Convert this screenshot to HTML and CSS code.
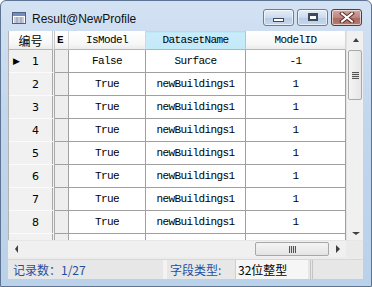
FILE: index.html
```html
<!DOCTYPE html>
<html lang="zh">
<head>
	<meta charset="UTF-8">
	<title>Result@NewProfile</title>
	<link rel="stylesheet" href="styles.css">
</head>
<body>
	<div class="window">
		<div class="titlebar">
			<svg class="appicon" width="14" height="12" viewBox="0 0 14 12">
				<rect x="0.5" y="0.5" width="13" height="11" fill="#fff" stroke="#55607a"/>
				<rect x="1" y="1" width="12" height="3" fill="#6f8fc4"/>
				<path d="M2 6h10M2 8h10M2 10h10M5 5v6M9 5v6" stroke="#8a9ab8" stroke-width="1"/>
			</svg>
			<span class="title">Result@NewProfile</span>
			<div class="caption-btns">
				<div class="cbtn"><span class="ico-min"></span></div>
				<div class="cbtn"><span class="ico-max"></span></div>
				<div class="cbtn close">
					<svg width="16" height="11" viewBox="0 0 16 11">
						<path d="M3 1.5l10 8M13 1.5l-10 8" stroke="#5a2a25" stroke-width="4" stroke-linecap="square"/>
						<path d="M3 1.5l10 8M13 1.5l-10 8" stroke="#fff" stroke-width="2" stroke-linecap="square"/>
					</svg>
				</div>
			</div>
		</div>

		<div class="client">
			<div class="gridwrap">
				<div class="grid">
					<div class="row head">
						<div class="rh">编号</div>
						<div class="c e">E</div>
						<div class="c">IsModel</div>
						<div class="c sel">DatasetName</div>
						<div class="c">ModelID</div>
					</div>
					<div class="row">
						<div class="rh"><span class="cur">&#9654;</span>1</div>
						<div class="c e"></div>
						<div class="c">False</div>
						<div class="c">Surface</div>
						<div class="c">-1</div>
					</div>
					<div class="row">
						<div class="rh">2</div>
						<div class="c e"></div>
						<div class="c">True</div>
						<div class="c">newBuildings1</div>
						<div class="c">1</div>
					</div>
					<div class="row">
						<div class="rh">3</div>
						<div class="c e"></div>
						<div class="c">True</div>
						<div class="c">newBuildings1</div>
						<div class="c">1</div>
					</div>
					<div class="row">
						<div class="rh">4</div>
						<div class="c e"></div>
						<div class="c">True</div>
						<div class="c">newBuildings1</div>
						<div class="c">1</div>
					</div>
					<div class="row">
						<div class="rh">5</div>
						<div class="c e"></div>
						<div class="c">True</div>
						<div class="c">newBuildings1</div>
						<div class="c">1</div>
					</div>
					<div class="row">
						<div class="rh">6</div>
						<div class="c e"></div>
						<div class="c">True</div>
						<div class="c">newBuildings1</div>
						<div class="c">1</div>
					</div>
					<div class="row">
						<div class="rh">7</div>
						<div class="c e"></div>
						<div class="c">True</div>
						<div class="c">newBuildings1</div>
						<div class="c">1</div>
					</div>
					<div class="row">
						<div class="rh">8</div>
						<div class="c e"></div>
						<div class="c">True</div>
						<div class="c">newBuildings1</div>
						<div class="c">1</div>
					</div>
					<div class="row">
						<div class="rh"></div>
						<div class="c e"></div>
						<div class="c"></div>
						<div class="c"></div>
						<div class="c"></div>
					</div>
				</div>
				<div class="vscroll">
					<div class="sbtn"><span class="arr up"></span></div>
					<div class="vthumb"><span class="grip-h"></span></div>
					<div class="track"></div>
					<div class="sbtn"><span class="arr down"></span></div>
				</div>
			</div>

			<div class="hrow">
				<div class="hscroll">
					<div class="sbtn"><span class="arr left"></span></div>
					<div class="htrack"></div>
					<div class="hthumb"><span class="grip-v"></span></div>
					<div class="sbtn"><span class="arr right"></span></div>
				</div>
				<div class="corner"></div>
			</div>

			<div class="statusbar">
				<div class="panel first">记录数：1/27</div>
				<div class="panel label">字段类型:</div>
				<div class="panel value">32位整型</div>
				<div class="panel last"></div>
			</div>
		</div>
	</div>
</body>
</html>
```

FILE: styles.css
```css
* {
	box-sizing: border-box;
}
html, body {
	margin: 0;
	padding: 0;
	background: #fff;
}
/* 窗口外框 */
.window {
	width: 372px;
	height: 287px;
	border: 1px solid #5d7592;
	border-radius: 6px 6px 0 0;
	background: linear-gradient(180deg, #d3e2f3 0%, #c2d6ed 40%, #bad1ea 100%);
	display: flex;
	flex-direction: column;
	overflow: hidden;
}
.titlebar {
	height: 30px;
	display: flex;
	align-items: center;
	padding-left: 11px;
	padding-top: 5px;
	flex: none;
}
.appicon {
	margin-top: -2px;
}
.title {
	font-family: "Liberation Sans", "Noto Sans", sans-serif;
	font-size: 12px;
	color: #111;
	margin-left: 6px;
	margin-top: 1px;
}
.caption-btns {
	margin-left: auto;
	margin-right: 9px;
	margin-top: -3px;
	display: flex;
	gap: 3px;
}
.cbtn {
	width: 31px;
	height: 17px;
	border: 1px solid #6a7d95;
	border-radius: 3px;
	background: linear-gradient(180deg, #e4edf7 0%, #cbdbee 50%, #b7cce5 51%, #c7d8ec 100%);
	box-shadow: inset 0 0 0 1px rgba(255,255,255,.6);
	display: flex;
	align-items: center;
	justify-content: center;
}
.cbtn.close {
	width: 31px;
	border-color: #5b3a36;
	background: linear-gradient(180deg, #d2a8a2 0%, #bd867e 50%, #a86a61 51%, #b47c74 100%);
}
.ico-min {
	width: 11px;
	height: 4px;
	margin-top: 5px;
	background: #fff;
	border: 1px solid #3e4b5c;
}
.ico-max {
	width: 10px;
	height: 8px;
	border: 1px solid #3e4b5c;
	border-top-width: 2px;
	background: #fff;
	box-shadow: inset 0 0 0 1px #3e4b5c, inset 0 0 0 2px #fff;
}

/* 客户区 */
.client {
	flex: 1;
	margin: 0 8px 8px 7px;
	display: flex;
	flex-direction: column;
	background: #ececec;
}
.gridwrap {
	height: 209px;
	display: flex;
	background: #fff;
	border-left: 1px solid #b3b3b3;
}
.grid {
	width: 338px;
	height: 209px;
	overflow: hidden;
	font-family: "Liberation Mono", "DejaVu Sans Mono", monospace;
	font-size: 11px;
	letter-spacing: -0.6px;
	color: #000;
}
.row {
	display: grid;
	grid-template-columns: 46px 14px 77px 100px 100px;
	height: 23px;
}
.row .c,
.row .rh {
	display: flex;
	align-items: center;
	justify-content: center;
	border-right: 1px solid #a0a0a0;
	border-bottom: 1px solid #a0a0a0;
	white-space: nowrap;
}
.row .rh {
	background: #f1f1f1;
	border-bottom-color: #fbfbfb;
	border-right: 3px double #a9a9a9;
	padding-left: 10px;
	font-family: "DejaVu Sans", "Noto Sans", sans-serif;
	font-size: 11px;
	letter-spacing: 0;
	position: relative;
}
.cur {
	position: absolute;
	left: 4px;
	top: 6px;
	font-size: 9px;
	color: #000;
}
.row .c.e {
	background: #eeeeee;
	border-bottom-color: #a0a0a0;
}
/* 表头 */
.row.head {
	height: 19px;
}
.row.head .c,
.row.head .rh {
	background: linear-gradient(180deg, #ffffff 0%, #f7f7f7 70%, #ececec 100%);
	border-right: 1px solid #d6d6d6;
	border-bottom: 1px solid #b5b5b5;
}
.row.head .rh {
	padding-left: 0;
	font-family: "Noto Sans CJK SC", sans-serif;
	font-size: 12px;
	border-right: 3px double #c8c8c8;
}
.row.head .c.e {
	justify-content: flex-start;
	padding-left: 2px;
	font-weight: bold;
}
.row.head .c.sel {
	background: linear-gradient(180deg, #a6dcf3 0%, #c9ecfa 12%, #c4e9f9 100%);
	border-right-color: #9fcde2;
}

/* 滚动条 */
.vscroll {
	width: 17px;
	display: flex;
	flex-direction: column;
	background: #f0f0f0;
	border-left: 1px solid #e3e3e3;
}
.sbtn {
	width: 17px;
	height: 17px;
	display: flex;
	align-items: center;
	justify-content: center;
	flex: none;
}
.vscroll .sbtn:first-child {
	height: 18px;
}
.track,
.htrack {
	flex: 1;
}
.vthumb {
	height: 50px;
	margin: 1px 1px 0;
	border: 1px solid #a8a8a8;
	border-radius: 2px;
	background: linear-gradient(90deg, #f4f4f4, #e6e6e6);
	display: flex;
	align-items: center;
	justify-content: center;
}
.grip-h {
	width: 7px;
	height: 7px;
	background: repeating-linear-gradient(180deg, #555 0 1px, #dedede 1px 2px);
}
.hrow {
	height: 17px;
	display: flex;
	background: #f0f0f0;
	border-top: 1px solid #e6e6e6;
	flex: none;
}
.hscroll {
	flex: 1;
	display: flex;
	align-items: center;
}
.hthumb {
	width: 74px;
	height: 14px;
	border: 1px solid #a8a8a8;
	border-radius: 2px;
	background: linear-gradient(180deg, #f4f4f4, #e4e4e4);
	display: flex;
	align-items: center;
	justify-content: center;
}
.grip-v {
	width: 7px;
	height: 7px;
	background: repeating-linear-gradient(90deg, #555 0 1px, #dedede 1px 2px);
}
.corner {
	width: 17px;
	background: #eaeaea;
}
.arr {
	width: 0;
	height: 0;
	border: 4px solid transparent;
}
.arr.up {
	border-bottom-color: #3f3f3f;
	border-top-width: 0;
	border-left-width: 3px;
	border-right-width: 3px;
}
.arr.down {
	border-top-color: #3f3f3f;
	border-bottom-width: 0;
	border-left-width: 4px;
	border-right-width: 4px;
	border-top-width: 3px;
	margin-top: 4px;
}
.arr.left {
	border-right-color: #3f3f3f;
	border-left-width: 0;
	border-top-width: 4px;
	border-bottom-width: 4px;
	border-right-width: 3px;
}
.arr.right {
	border-left-color: #3f3f3f;
	border-right-width: 0;
	border-top-width: 4px;
	border-bottom-width: 4px;
	border-left-width: 4px;
}

/* 状态栏 */
.statusbar {
	height: 20px;
	margin-top: 2px;
	display: flex;
	background: #e7e7e7;
	font-family: "Noto Sans CJK SC", sans-serif;
	font-size: 12px;
	color: #1f4fa0;
	border-top: 1px solid #d8d8d8;
}
.panel {
	display: flex;
	align-items: center;
	white-space: nowrap;
	line-height: 1;
}
.panel.first {
	width: 159px;
	padding-left: 5px;
	border-right: 4px solid #f3f3f3;
}
.panel.label {
	width: 68px;
	padding-left: 3px;
}
.panel.value {
	width: 73px;
	padding-left: 2px;
	color: #000;
	background: #f6f6f6;
	border-left: 1px solid #cfcfcf;
}
.panel.last {
	flex: 1;
	border-left: 3px double #c4c4c4;
	margin-left: 2px;
}
```
